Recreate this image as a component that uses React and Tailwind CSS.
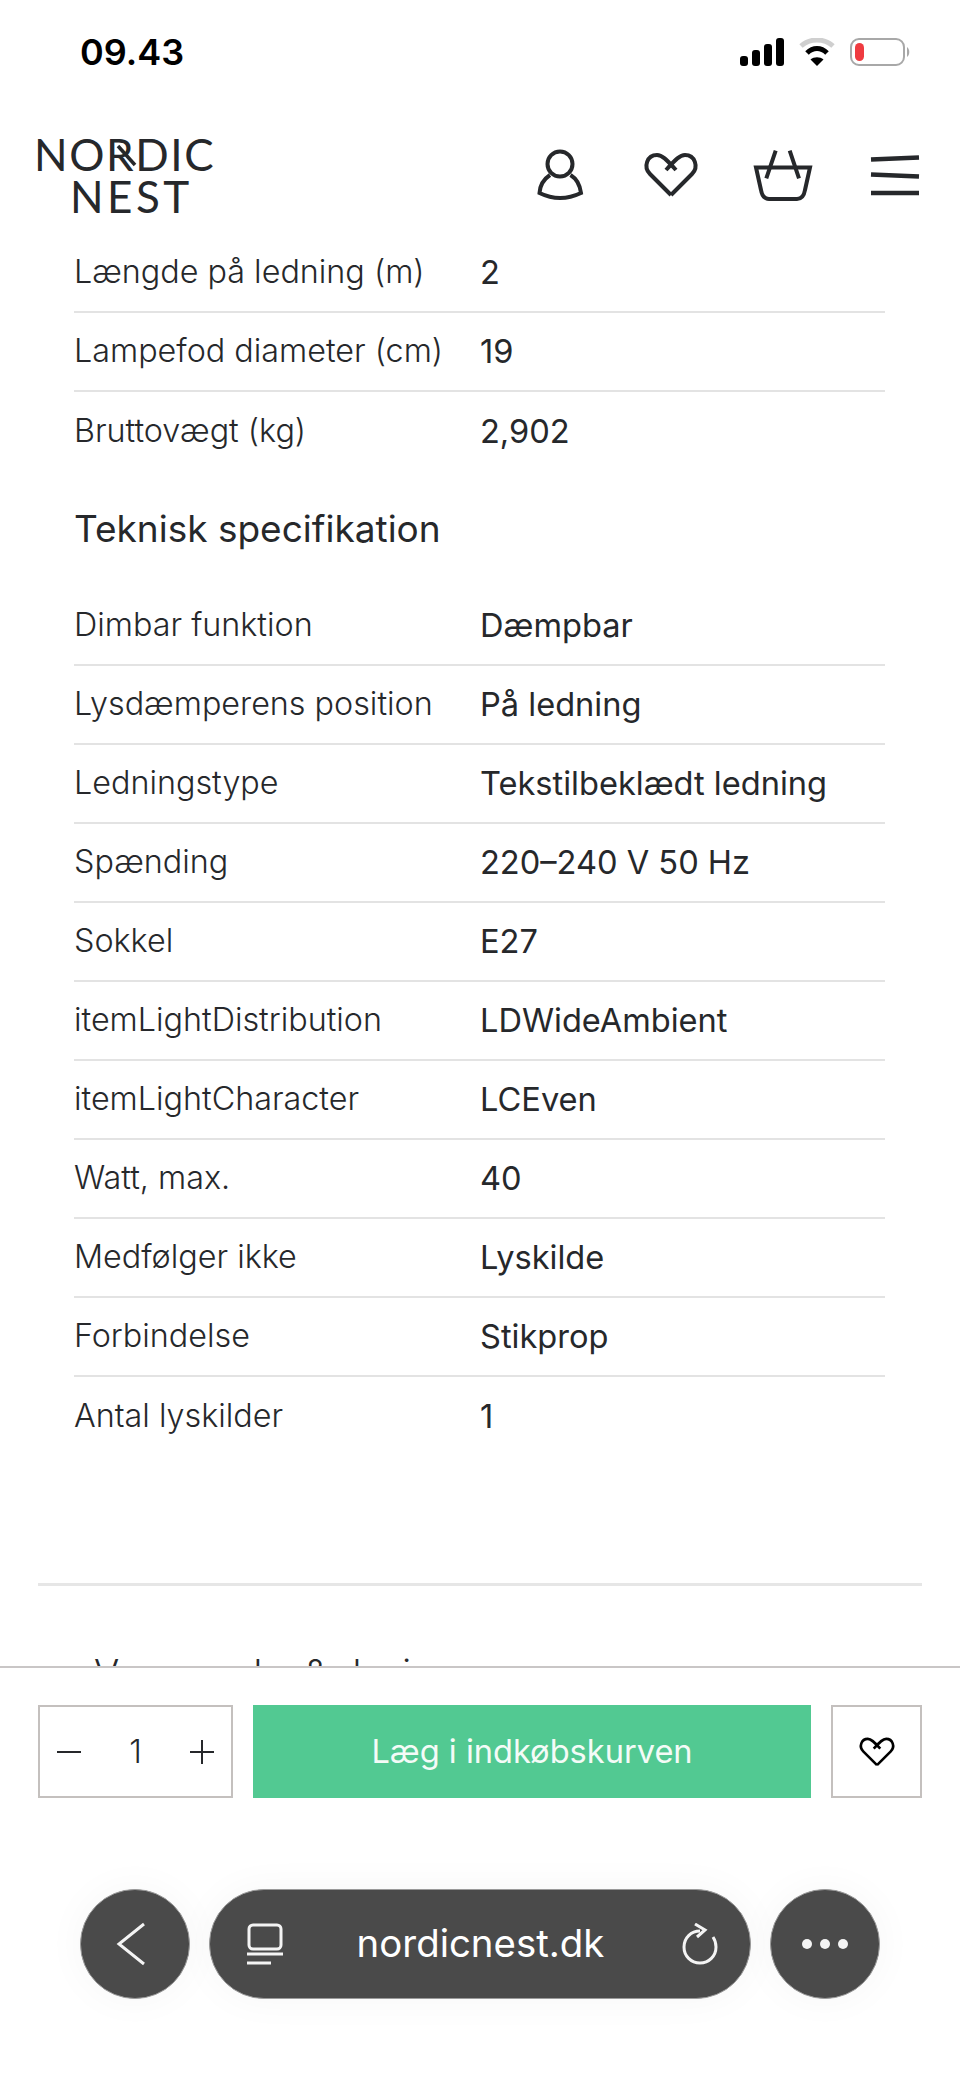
const inter = "font-['Inter',sans-serif]";

const productRows = [
  ['Længde på ledning (m)', '2'],
  ['Lampefod diameter (cm)', '19'],
  ['Bruttovægt (kg)', '2,902'],
];

const techRows = [
  ['Dimbar funktion', 'Dæmpbar'],
  ['Lysdæmperens position', 'På ledning'],
  ['Ledningstype', 'Tekstilbeklædt ledning'],
  ['Spænding', '220–240 V 50 Hz'],
  ['Sokkel', 'E27'],
  ['itemLightDistribution', 'LDWideAmbient'],
  ['itemLightCharacter', 'LCEven'],
  ['Watt, max.', '40'],
  ['Medfølger ikke', 'Lyskilde'],
  ['Forbindelse', 'Stikprop'],
  ['Antal lyskilder', '1'],
];

function SpecTable({ rows }) {
  return (
    <div className="ml-[74px] w-[811px]">
      {rows.map(([label, value], i) => (
        <div
          key={label}
          className={`grid h-[79px] grid-cols-[406px_1fr] items-center text-[#26282b] ${
            i < rows.length - 1 ? 'border-b-2 border-[#e3e3e3]' : ''
          }`}
        >
          <span className="text-[32.3px] font-light">{label}</span>
          <span className="text-[32.6px] font-normal">{value}</span>
        </div>
      ))}
    </div>
  );
}

function HeartIcon({ className }) {
  return (
    <svg viewBox="0 0 64 64" fill="none" stroke="currentColor" strokeWidth="4" className={className}>
      <path d="M32 52 L11 31 C4 24 8 12 18 12 C23 12 27 16 37 27" />
      <path d="M27 27 C37 16 41 12 46 12 C56 12 60 24 53 31 L32 52" />
    </svg>
  );
}

function Header() {
  return (
    <header className="flex h-[130px] shrink-0 items-center pl-[34px] pr-[33px] pt-[12px] text-[#26282b]">
      <div className="relative w-[180px] font-['Lato',sans-serif] text-[44px] leading-[42px]">
        <div className="tracking-[1.6px]">NORDIC</div>
        <div className="ml-[36px] tracking-[3.5px]">NEST</div>
        <svg viewBox="0 0 24 24" fill="none" stroke="currentColor" strokeWidth="3.5" className="absolute left-[81px] top-[10px] h-6 w-6">
          <path d="M3 3 L20 22" />
        </svg>
      </div>
      <div className="ml-auto flex gap-[48px]">
        <svg viewBox="0 0 64 64" fill="none" stroke="currentColor" strokeWidth="4" className="h-16 w-16">
          <circle cx="33" cy="21" r="12.5" />
          <path d="M23 32 C17 36 13 42 12.5 50 Q33 60 54 50 C53 42 50 36 43.5 32" />
        </svg>
        <HeartIcon className="h-16 w-16" />
        <svg viewBox="0 0 64 64" fill="none" stroke="currentColor" strokeWidth="4" className="h-16 w-16">
          <path d="M5 24.5 H59 L54 47 C53 53 50 56 46 56 H18 C14 56 11 53 10 47 Z" />
          <path d="M24.7 7.7 L15.3 35.3 M38.7 7.7 L48 35.3" />
        </svg>
        <svg viewBox="0 0 64 64" fill="none" stroke="currentColor" strokeWidth="4.6" className="h-16 w-16">
          <path d="M8 16.5 L56 14.5 M8 31.5 L56 33.5 M8 50 H56" />
        </svg>
      </div>
    </header>
  );
}

function StatusBar() {
  return (
    <div className="flex h-[104px] shrink-0 items-center pl-[80px] pr-[50px]">
      <span className={`${inter} text-[36px] font-semibold text-black`}>09.43</span>
      <div className="ml-auto flex items-center gap-[15px]">
        <svg viewBox="0 0 44 28" className="h-[28px] w-[44px]" fill="#000">
          <rect x="0" y="18" width="8" height="10" rx="3" />
          <rect x="12" y="12" width="8" height="16" rx="3" />
          <rect x="24" y="6" width="8" height="22" rx="3" />
          <rect x="36" y="0" width="8" height="28" rx="3" />
        </svg>
        <svg viewBox="0 0 36 28" className="h-[28px] w-[36px]" fill="none" strokeWidth="5">
          <path d="M2 8 C11 0 25 0 34 8" stroke="#cfcfcf" />
          <path d="M8 15 C14 9 22 9 28 15" stroke="#000" />
          <path d="M18 28 L11.5 21.5 C15 18.5 21 18.5 24.5 21.5 Z" fill="#000" />
        </svg>
        <svg viewBox="0 0 60 28" className="h-[28px] w-[60px]" fill="none">
          <rect x="1" y="1" width="53" height="26" rx="8" stroke="#a8a8a8" strokeWidth="2" />
          <rect x="5" y="5" width="9" height="18" rx="4.5" fill="#ef3b40" />
          <path d="M57 9 C60 11 60 17 57 19 Z" fill="#a8a8a8" />
        </svg>
      </div>
    </div>
  );
}

function BrowserBar() {
  return (
    <div className="flex items-center justify-center gap-[19px] text-[#f4f4f4]">
      <button className="flex h-[110px] w-[110px] items-center justify-center rounded-full border border-[#9a9a9a] bg-[#4a4a4a] shadow-[0_0_40px_rgba(0,0,0,0.04)]">
        <svg viewBox="0 0 30 44" fill="none" stroke="currentColor" strokeWidth="3" className="mr-[8px] h-[44px] w-[30px]">
          <path d="M28 2 L3 22 L28 42" />
        </svg>
      </button>
      <div className="flex h-[110px] w-[542px] items-center rounded-[55px] border border-[#9a9a9a] bg-[#4a4a4a] pl-[37px] pr-[32px] shadow-[0_0_40px_rgba(0,0,0,0.04)]">
        <svg viewBox="0 0 36 42" fill="none" stroke="currentColor" strokeWidth="3" className="h-[42px] w-[36px]">
          <rect x="2" y="2" width="32" height="24" rx="4" />
          <path d="M0 31 H36 M0 40 H24" />
        </svg>
        <span className={`${inter} flex-1 pr-[4px] text-center text-[38.4px] font-normal text-white`}>nordicnest.dk</span>
        <svg viewBox="0 0 36 42" fill="none" stroke="currentColor" strokeWidth="3" className="h-[42px] w-[36px]">
          <path d="M18 8 C9 8 2 15 2 24 C2 33 9 40 18 40 C27 40 34 33 34 24 C34 20 33 17 31 14" />
          <path d="M13 1 L23 7 L15 14" />
        </svg>
      </div>
      <button className="flex h-[110px] w-[110px] items-center justify-center gap-[8px] rounded-full border border-[#9a9a9a] bg-[#4a4a4a] shadow-[0_0_40px_rgba(0,0,0,0.04)]">
        <span className="h-[10px] w-[10px] rounded-full bg-[#f4f4f4]" />
        <span className="h-[10px] w-[10px] rounded-full bg-[#f4f4f4]" />
        <span className="h-[10px] w-[10px] rounded-full bg-[#f4f4f4]" />
      </button>
    </div>
  );
}

export default function App() {
  return (
    <div className={`${inter} flex h-[2078px] w-[960px] flex-col overflow-hidden bg-white`}>
      <StatusBar />
      <Header />

      <main className="min-h-0 flex-1 overflow-hidden">
        <SpecTable rows={productRows} />
        <h2 className="ml-[74px] flex h-[116px] items-center text-[37px] font-normal text-[#26282b]">
          Teknisk specifikation
        </h2>
        <SpecTable rows={techRows} />
        <div className="mx-[38px] mt-[127px] h-[3px] bg-[#e6e6e6]" />
        <h3 className="ml-[94px] mt-[60px] text-[37.5px] font-light text-[#26282b]">Varemærke &amp; design</h3>
      </main>

      <footer className="h-[412px] shrink-0 border-t-2 border-[#c9c6c6] bg-white">
        <div className="mx-[38px] mt-[37px] flex h-[93px] gap-[20px]">
          <div className="flex w-[195px] items-center justify-between border-2 border-[#c4c0be] px-[17px] text-[#26282b]">
            <svg viewBox="0 0 24 24" fill="none" stroke="currentColor" strokeWidth="2" className="h-6 w-6">
              <path d="M0 12 H24" />
            </svg>
            <span className="text-[32px] font-light">1</span>
            <svg viewBox="0 0 24 24" fill="none" stroke="currentColor" strokeWidth="2" className="h-6 w-6">
              <path d="M0 12 H24 M12 0 V24" />
            </svg>
          </div>
          <button className="flex-1 bg-[#52c992] text-[32.6px] font-normal text-[#f4fbf7]">Læg i indkøbskurven</button>
          <button className="flex w-[91px] items-center justify-center border-2 border-[#c4c0be] text-black">
            <HeartIcon className="h-[42px] w-[42px]" />
          </button>
        </div>
        <div className="mt-[91px]">
          <BrowserBar />
        </div>
      </footer>
    </div>
  );
}
